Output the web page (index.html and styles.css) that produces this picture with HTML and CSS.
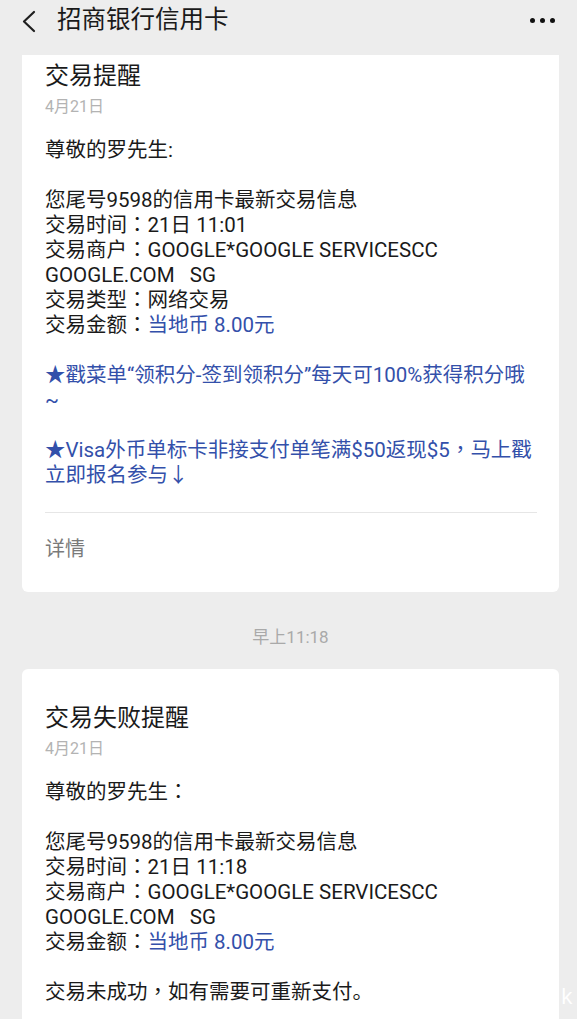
FILE: index.html
```html
<!DOCTYPE html>
<html>
<head>
    <meta charset="utf-8">
    <meta name="viewport" content="width=device-width, initial-scale=1.0">
    <title>招商银行信用卡</title>
    <link rel="stylesheet" href="styles.css">
</head>
<body>
    <header class="topbar">
        <svg class="back" width="18" height="24" viewBox="0 0 18 24">
            <polyline points="14,3 4,12.5 14,22" fill="none" stroke="#1f1f1f" stroke-width="2.2" stroke-linecap="round" stroke-linejoin="round"/>
        </svg>
        <h1 class="title">招商银行信用卡</h1>
        <div class="more"><i></i><i></i><i></i></div>
    </header>

    <main class="feed">
        <!-- 第一张卡片，上半部分被标题栏挡住 -->
        <section class="card card-cut">
            <h2 class="card-title">交易提醒</h2>
            <div class="card-date">4月21日</div>
            <div class="msg">
                <p>尊敬的罗先生:</p>
                <p class="gap"></p>
                <p>您尾号9598的信用卡最新交易信息</p>
                <p>交易时间<span class="pn">：</span>21日 11:01</p>
                <p>交易商户<span class="pn">：</span>GOOGLE*GOOGLE SERVICESCC GOOGLE.COM&nbsp;&nbsp; SG</p>
                <p>交易类型<span class="pn">：</span>网络交易</p>
                <p>交易金额<span class="pn">：</span><span class="blue">当地币 8.00元</span></p>
                <p class="gap"></p>
                <p class="blue">★戳菜单“领积分-签到领积分”每天可100%获得积分哦~</p>
                <p class="gap"></p>
                <p class="blue">★Visa外币单标卡非接支付单笔满$50返现$5<span class="pn">，</span>马上戳立即报名参与↓</p>
            </div>
            <div class="card-foot">详情</div>
        </section>

        <div class="time">早上11:18</div>

        <section class="card">
            <h2 class="card-title">交易失败提醒</h2>
            <div class="card-date">4月21日</div>
            <div class="msg">
                <p>尊敬的罗先生<span class="pn">：</span></p>
                <p class="gap"></p>
                <p>您尾号9598的信用卡最新交易信息</p>
                <p>交易时间<span class="pn">：</span>21日 11:18</p>
                <p>交易商户<span class="pn">：</span>GOOGLE*GOOGLE SERVICESCC GOOGLE.COM&nbsp;&nbsp; SG</p>
                <p>交易金额<span class="pn">：</span><span class="blue">当地币 8.00元</span></p>
                <p class="gap"></p>
                <p>交易未成功<span class="pn">，</span>如有需要可重新支付。</p>
            </div>
        </section>
    </main>

    <span class="mark">k</span>
</body>
</html>
```

FILE: styles.css
```css
html, body {
    margin: 0;
    padding: 0;
    overflow: hidden;
}
body {
    background: #ededed;
    font-family: Roboto, "Noto Sans CJK SC", sans-serif;
    color: #1a1a1a;
}

.topbar {
    height: 55px;
    display: flex;
    align-items: flex-start;
    padding: 0 22px 0 20px;
    background: #ededed;
}
.back {
    margin-top: 9px;
}
.title {
    margin: 0 0 0 19px;
    font-size: 24.5px;
    font-weight: normal;
    line-height: 40px;
    color: #1a1a1a;
}
.more {
    margin-left: auto;
    margin-top: 18px;
    display: flex;
    gap: 5px;
}
.more i {
    width: 5px;
    height: 5px;
    border-radius: 50%;
    background: #111;
}

.feed {
    padding: 0 18px 0 22px;
}
.card {
    background: #fff;
    border-radius: 6px;
    padding: 34px 22px 60px 23px;
}
.card-cut {
    border-radius: 0 0 6px 6px;
    padding-top: 6px;
    padding-bottom: 30px;
}
.card-title {
    margin: 0;
    font-size: 24px;
    font-weight: normal;
    line-height: 30px;
}
.card-date {
    margin-top: 5px;
    font-size: 16px;
    line-height: 22px;
    color: #b3b3b3;
}
.msg {
    margin-top: 20px;
    font-size: 20.5px;
    line-height: 25px;
}
.msg p {
    margin: 0;
}
.msg .gap {
    height: 25px;
}
/* 全角标点居中 */
.pn {
    font-family: "Noto Sans CJK TC", sans-serif;
    line-height: 1;
}
.blue {
    color: #3350aa;
}
.card-foot {
    margin-top: 24px;
    padding-top: 24px;
    border-top: 1px solid #e6e6e6;
    font-size: 20px;
    line-height: 25px;
    color: #7a7a7a;
}

.time {
    margin: 34px 0 21px;
    text-align: center;
    font-size: 17px;
    line-height: 22px;
    color: #a9a9a9;
}

.mark {
    position: absolute;
    left: 561px;
    top: 980px;
    font-family: "Open Sans", sans-serif;
    font-size: 22px;
    color: #fff;
}
```
